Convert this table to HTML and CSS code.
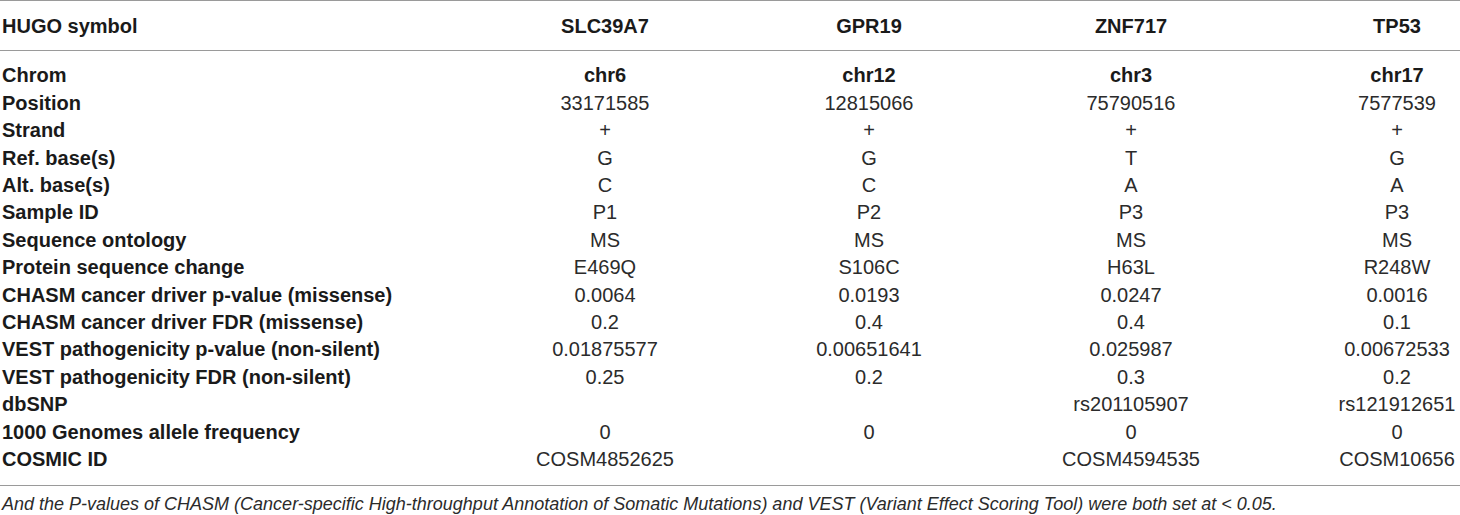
FILE: index.html
```html
<!DOCTYPE html>
<html>
<head>
<meta charset="utf-8">
<link rel="stylesheet" href="styles.css">
</head>
<body>
<table class="data">
  <colgroup>
    <col class="c-label">
    <col class="c-a">
    <col class="c-b">
    <col class="c-c">
    <col class="c-d">
  </colgroup>
  <thead>
    <tr>
      <th class="label">HUGO symbol</th>
      <th>SLC39A7</th>
      <th>GPR19</th>
      <th>ZNF717</th>
      <th class="last">TP53</th>
    </tr>
  </thead>
  <tbody>
    <tr class="first">
      <td class="label">Chrom</td>
      <td class="strong">chr6</td>
      <td class="strong">chr12</td>
      <td class="strong">chr3</td>
      <td class="strong last">chr17</td>
    </tr>
    <tr>
      <td class="label">Position</td>
      <td>33171585</td>
      <td>12815066</td>
      <td>75790516</td>
      <td class="last">7577539</td>
    </tr>
    <tr>
      <td class="label">Strand</td>
      <td>+</td>
      <td>+</td>
      <td>+</td>
      <td class="last">+</td>
    </tr>
    <tr>
      <td class="label">Ref. base(s)</td>
      <td>G</td>
      <td>G</td>
      <td>T</td>
      <td class="last">G</td>
    </tr>
    <tr>
      <td class="label">Alt. base(s)</td>
      <td>C</td>
      <td>C</td>
      <td>A</td>
      <td class="last">A</td>
    </tr>
    <tr>
      <td class="label">Sample ID</td>
      <td>P1</td>
      <td>P2</td>
      <td>P3</td>
      <td class="last">P3</td>
    </tr>
    <tr>
      <td class="label">Sequence ontology</td>
      <td>MS</td>
      <td>MS</td>
      <td>MS</td>
      <td class="last">MS</td>
    </tr>
    <tr>
      <td class="label">Protein sequence change</td>
      <td>E469Q</td>
      <td>S106C</td>
      <td>H63L</td>
      <td class="last">R248W</td>
    </tr>
    <tr>
      <td class="label">CHASM cancer driver p-value (missense)</td>
      <td>0.0064</td>
      <td>0.0193</td>
      <td>0.0247</td>
      <td class="last">0.0016</td>
    </tr>
    <tr>
      <td class="label">CHASM cancer driver FDR (missense)</td>
      <td>0.2</td>
      <td>0.4</td>
      <td>0.4</td>
      <td class="last">0.1</td>
    </tr>
    <tr>
      <td class="label">VEST pathogenicity p-value (non-silent)</td>
      <td>0.01875577</td>
      <td>0.00651641</td>
      <td>0.025987</td>
      <td class="last">0.00672533</td>
    </tr>
    <tr>
      <td class="label">VEST pathogenicity FDR (non-silent)</td>
      <td>0.25</td>
      <td>0.2</td>
      <td>0.3</td>
      <td class="last">0.2</td>
    </tr>
    <tr>
      <td class="label">dbSNP</td>
      <td></td>
      <td></td>
      <td>rs201105907</td>
      <td class="last">rs121912651</td>
    </tr>
    <tr>
      <td class="label">1000 Genomes allele frequency</td>
      <td>0</td>
      <td>0</td>
      <td>0</td>
      <td class="last">0</td>
    </tr>
    <tr class="final">
      <td class="label">COSMIC ID</td>
      <td>COSM4852625</td>
      <td></td>
      <td>COSM4594535</td>
      <td class="last">COSM10656</td>
    </tr>
  </tbody>
</table>
<p class="note">And the P-values of CHASM (Cancer-specific High-throughput Annotation of Somatic Mutations) and VEST (Variant Effect Scoring Tool) were both set at &lt; 0.05.</p>
</body>
</html>
```

FILE: styles.css
```css
html, body {
  margin: 0;
  padding: 0;
  background: #ffffff;
}

body {
  font-family: "Liberation Sans", Arial, Helvetica, sans-serif;
  color: #231f20;
  width: 1460px;
  overflow: hidden;
}

.data {
  width: 1460px;
  table-layout: fixed;
  border-collapse: collapse;
  font-size: 20px;
  line-height: 27.4px;
}

.c-label { width: 472px; }
.c-a { width: 266px; }
.c-b { width: 262px; }
.c-c { width: 262px; }
.c-d { width: 198px; }

.data th,
.data td {
  padding: 0;
  text-align: center;
  white-space: nowrap;
  font-weight: 400;
  vertical-align: top;
  color: #2b2b2b;
}

.data th {
  font-weight: 700;
  color: #1a1a1a;
  border-top: 1px solid #9a9a9a;
  border-bottom: 1px solid #9a9a9a;
  padding-top: 12px;
  padding-bottom: 10px;
}

.data .label {
  text-align: left;
  padding-left: 2px;
  font-weight: 700;
  color: #1a1a1a;
}

.data .strong {
  font-weight: 700;
  color: #1a1a1a;
}

.data .last {
  padding-left: 72px;
}

.data tr.first td {
  padding-top: 11px;
}

.data tr.final td {
  padding-bottom: 11px;
  border-bottom: 1px solid #9a9a9a;
}

.note {
  margin: 8px 0 0 2px;
  font-size: 18px;
  line-height: 20px;
  font-style: italic;
  white-space: nowrap;
  color: #2b2b2b;
}
```
